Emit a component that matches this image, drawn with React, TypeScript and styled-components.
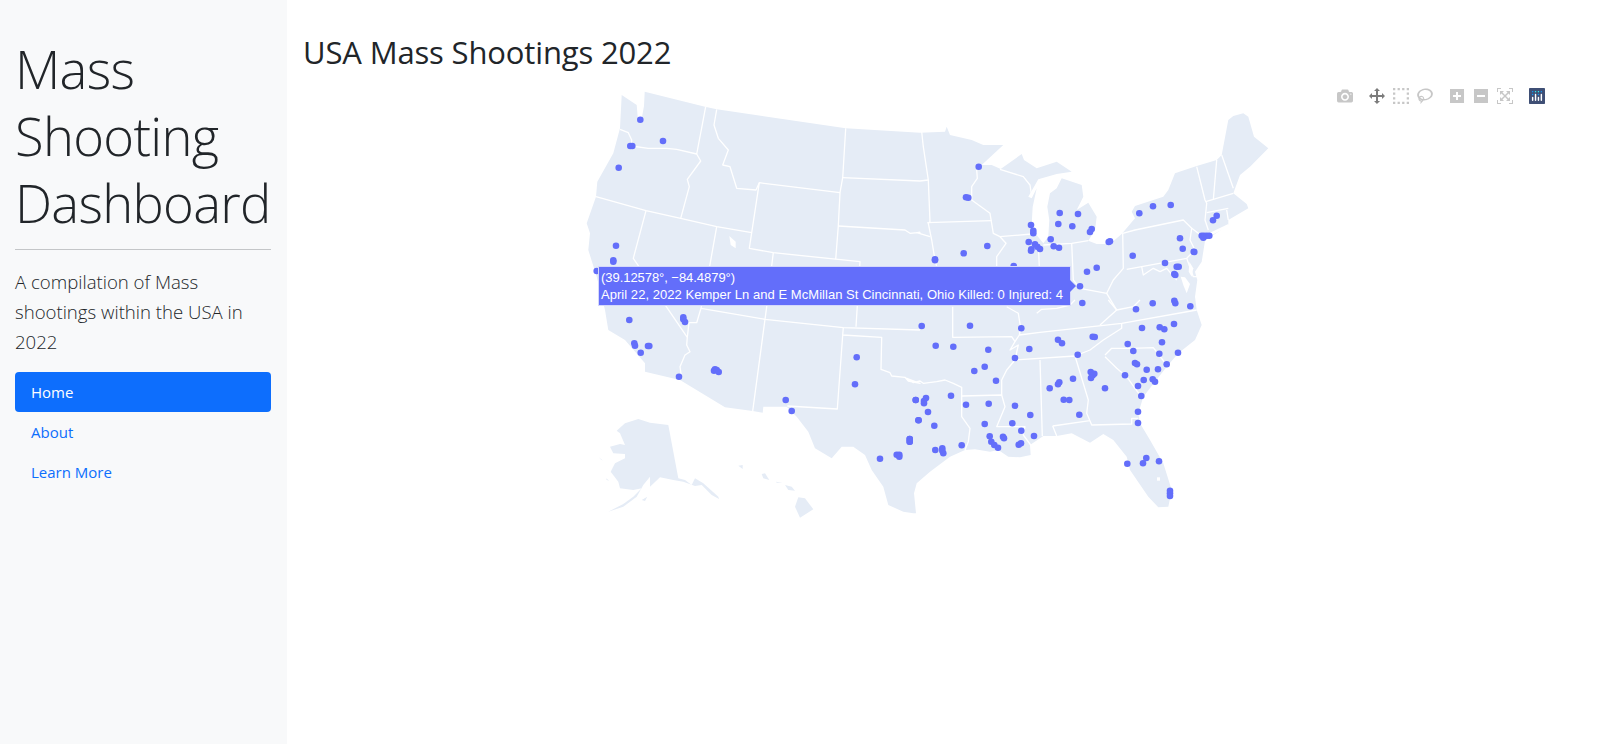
import styled, { createGlobalStyle } from 'styled-components'

const GlobalStyle = createGlobalStyle`
  html, body { margin: 0; padding: 0; height: 100%; overflow: hidden; background: #fff; }
  * { box-sizing: border-box; }
  body { font-family: "Open Sans", "Noto Sans", sans-serif; color: #212529; }
`

const Layout = styled.div`
  display: flex;
  height: 100vh;
`

const Sidebar = styled.aside`
  flex: 0 0 287px;
  min-width: 0;
  background: #f8f9fa;
  padding: 35px 16px 0 15px;
`

const Heading = styled.h1`
  margin: 0;
  font-size: 52.5px;
  font-weight: 300;
  line-height: 67.2px;
  letter-spacing: -0.7px;
`

const Rule = styled.hr`
  margin: 12px 0 17px;
  border: 0;
  border-top: 1px solid #c4c6c8;
`

const Lead = styled.p`
  margin: 0 0 15px;
  font-size: 18.6px;
  font-weight: 300;
  line-height: 30px;
`

const NavList = styled.nav`
  display: flex;
  flex-direction: column;
`

const NavLink = styled.a<{ $active?: boolean }>`
  display: block;
  height: 40px;
  padding: 0 16px;
  line-height: 40px;
  font-size: 15px;
  border-radius: 4px;
  text-decoration: none;
  color: ${p => (p.$active ? '#fff' : '#0d6efd')};
  background: ${p => (p.$active ? '#0d6efd' : 'transparent')};
`

const Main = styled.main`
  flex: 1;
  min-width: 0;
  padding: 29px 0 0 16px;
`

const Title = styled.h2`
  margin: 0;
  height: 55px;
  font-size: 31px;
  font-weight: 400;
  line-height: 46px;
  letter-spacing: -0.15px;
`

const PlotFrame = styled.div`
  position: relative;
  height: 450px;
`

const MapSvg = styled.svg`
  display: block;
  width: 100%;
  height: 100%;
`

const Land = styled.path`
  fill: #e5ecf6;
`

const Water = styled.path`
  fill: #fff;
`

const StateLine = styled.polyline`
  fill: none;
  stroke: #fff;
  stroke-width: 1.3;
  stroke-linejoin: round;
`

const Dot = styled.circle`
  fill: #636efa;
`

const ModeBar = styled.div`
  position: absolute;
  top: 1px;
  right: 49px;
  display: flex;
`

const ModeGroup = styled.div`
  display: flex;
  padding-left: 8px;
`

const ModeIcon = styled.svg<{ $on?: boolean }>`
  display: block;
  box-sizing: content-box;
  width: 16px;
  height: 16px;
  padding: 3px 4px;
  fill: ${p => (p.$on ? 'rgba(68,68,68,0.7)' : 'rgba(68,68,68,0.3)')};
`

const HoverBox = styled.div`
  position: absolute;
  left: 295px;
  top: 182px;
  width: 473px;
  height: 40px;
  padding: 2px 0 0 2px;
  background: #636efa;
  border: 1px solid #d5d8fb;
  color: #fff;
  font: 13px/17px "Liberation Sans", Arial, sans-serif;
  white-space: nowrap;

  &::after {
    content: '';
    position: absolute;
    left: 100%;
    top: 13px;
    border-style: solid;
    border-width: 6px 0 6px 6px;
    border-color: transparent transparent transparent #636efa;
  }
`

const HoverLine = styled.div<{ $spread?: boolean }>`
  letter-spacing: ${p => (p.$spread ? '0.04px' : '-0.05px')};
`

// map geometry is traced in four reference crops, each helper shifts one to page pixels
const crop = (ox: number, oy: number) => (s: string) =>
  s
    .trim()
    .split(/\s+/)
    .map(p => {
      const [x, y] = p.split(',').map(Number)
      return `${(ox + x / 3).toFixed(1)},${(oy + y / 3).toFixed(1)}`
    })
    .join(' ')

const nw = crop(570, 80)
const ne = crop(900, 80)
const sw = crop(570, 300)
const se = crop(900, 300)

const shape = (pts: string) => `M${pts.replace(/\s+/g, 'L')}Z`

const mainland = [
  nw('155,45 200,75 203,112 214,122 222,78 224,35 405,80 440,88 827,145 1050,158'),
  ne('135,155 140,140 150,165 215,180 250,195 310,195 245,255 275,255 302,267 365,222 372,240 410,265 470,245 515,275 470,282 415,298 385,350 395,355 410,325 398,380 395,430 402,455 430,490 445,470 448,420 442,380 450,340 470,325 485,295 545,315 550,350 530,390 565,368 590,410 585,450 565,482 590,492 630,492 665,462 705,415 695,395 705,378 790,350 805,330 825,280 890,258 950,240 965,225 985,120 1000,108 1030,100 1045,110 1062,170 1105,205 1050,260 1020,285 1000,340 1040,372 1045,385 985,420 985,435 930,472 915,482 905,545 885,575 892,600 885,650'),
  se('890,30 905,75 885,120 835,160 800,200 765,245 730,290 715,340 720,370 750,420 790,490 815,570 805,620 775,622 745,590 690,510 680,470 640,420 610,402 570,428 515,400 470,408 430,408 390,435 392,465 360,472 325,470 295,450 270,455 225,448 195,450 150,470 90,515 50,550 42,580 48,640'),
  sw('1030,640 1000,635 955,615 940,560 905,510 885,465 850,440 815,440 785,475 735,445 715,395 680,350 650,320 580,320 578,338 548,333 465,322 330,240 225,215 225,190 165,120 115,90 105,30'),
  nw('80,590 55,510 60,460 50,430 78,350 82,305 130,220 150,145'),
].join(' ')

const islands = [
  sw('205,357 240,368 295,375 325,535 345,540 365,555 375,535 400,550 445,590 447,597 425,585 395,555 375,558 340,545 310,540 270,532 240,560 240,530 220,555 200,590 160,620 115,635 160,612 190,590 215,565 190,570 150,565 145,545 122,515 135,490 165,475 165,462 130,460 120,440 150,432 165,435 150,400 140,392 165,370'),
  sw('215,600 232,590 225,603'),
  sw('85,470 100,483 92,478'),
  sw('108,535 118,542 110,540'),
  sw('505,497 518,495 518,507'),
  sw('575,522 585,520 598,540 580,535'),
  sw('618,545 638,548 620,548'),
  sw('645,555 665,560 675,572 655,570'),
  sw('685,592 705,595 730,628 690,653 675,620'),
]

const lakes = [
  nw('478,468 497,485 497,505 482,495'),
  se('771,532 780,532 780,542 771,542'),
  ne('842,590 855,592 870,612 860,640 850,615'),
  ne('868,545 880,565 875,590 866,575'),
  ne('930,458 985,432 987,438 935,466'),
]

const borders = [
  nw('150,148 175,158 185,180 185,198 235,205 290,205 320,208 380,222 392,243 352,298 358,320 332,415'),
  nw('407,80 380,222'),
  nw('440,88 432,135 445,175 475,210 458,255 480,260 500,325 558,330 568,308 810,338 818,293 827,145'),
  nw('818,293 1050,303') + ' ' + ne('85,300'),
  nw('568,308 545,458 538,505 610,518 870,545') + ' ' + sw('858,80'),
  nw('810,338 805,438 797,538'),
  nw('805,438 1005,450 1020,460 1050,457') + ' ' + ne('50,458 90,470'),
  nw('78,350 228,392 332,415 440,440 545,458'),
  nw('228,392 190,535') + ' ' + sw('352,112 350,135 360,155 345,165 330,200 335,235'),
  sw('352,112 357,68 380,68 393,25 585,58 820,83 1050,90'),
  nw('440,440 418,565') + ' ' + sw('393,25'),
  nw('610,518') + ' ' + sw('590,20 585,58 548,333'),
  sw('820,83 818,105 935,112 933,208 960,218 965,228 1005,232 1015,243 1050,250') + ' ' + se('20,235 40,248 60,243 70,250 110,245 135,240 160,250 185,262 185,350 210,385 205,425 195,450'),
  sw('818,105 802,327 652,318'),
  se('185,288 305,285 315,320 290,380 375,380 370,405 392,435'),
  se('158,20 158,112 335,110 345,125 330,150 355,135 345,180 320,210 305,240 305,285'),
  se('345,180 525,168 565,300 560,340 575,375 695,372 695,355 715,355'),
  se('358,105 420,97 665,70 890,30'),
  se('665,70 665,85 610,120 570,150 525,168'),
  se('615,165 635,145 695,145 760,143 800,195'),
  se('615,170 650,205 680,230 705,265 724,290'),
  se('420,180 427,408'),
  se('458,378 570,362'),
  se('458,378 470,408'),
  se('320,20 355,40 362,85 358,105 345,125'),
  se('410,40 425,28 470,25 510,15 525,0'),
  se('625,0 650,30 700,20 720,0'),
  se('600,75 650,30'),
  ne('65,155 70,200 85,300 90,425 85,430 95,480 105,540 110,560'),
  ne('82,428 275,422'),
  ne('230,270 232,295 215,320 215,360 270,400 280,460 300,470 318,490 290,530 290,560'),
  ne('300,470 395,462'),
  ne('300,268 370,290 390,315 395,350'),
  ne('415,490 418,560'),
  ne('430,495 515,490 565,482'),
  ne('515,490 520,600 540,625 620,640 640,600 670,565 668,460 705,450 850,420 875,445 870,480 885,510 860,535 680,568'),
  ne('620,640 650,690'),
  ne('875,445 915,475'),
  ne('890,260 915,360 920,370 915,420 925,450'),
  ne('950,240 940,360'),
  ne('965,225 1000,325'),
  ne('917,365 1000,340'),
  ne('920,398 985,385'),
  ne('980,390 985,420'),
  ne('860,535 880,590 895,590'),
  ne('725,560 730,585 760,565 780,575 800,565 830,600'),
]

const dots = [
  nw('211,119 279,183 181,198 187,198 146,263 138,497 130,541 130,545 80,573'),
  ne('236,260 198,352 205,353 479,399 534,402 393,435 475,432 517,439 400,452 400,460 575,447 570,456 452,478 386,486 262,498 405,493 412,500 420,507 394,508 393,512 461,499 477,503 191,520 105,538 105,541 630,484 626,486 840,475 848,506 881,515 883,516 698,527 795,549 830,560 836,560 823,582 826,585 590,563 561,575 540,619 547,669 758,670 708,688 823,662 826,670 871,679 718,400 759,379 812,375 950,407 939,421 905,467 912,467 920,467 928,467 910,473 341,558'),
  sw('178,60 340,52 340,58 345,66 193,130 195,137 212,158 234,138 238,138 327,230 435,208 432,212 440,210 446,216 860,172 855,253 647,300 665,333 1037,300 1045,361 1019,417 1019,425 930,476 980,464 988,464 988,470'),
  se('65,78 210,77 364,85 107,137 160,140 265,149 345,174 388,147 474,119 486,130 578,110 584,111 533,164 683,132 700,153 726,84 779,82 793,88 822,72 786,127 778,161 834,158 800,193 774,208 740,209 705,189 711,193 572,216 583,221 578,226 573,234 675,226 731,240 758,238 765,245 714,258 724,288 615,265 519,236 478,247 474,253 449,265 491,299 508,300 254,200 223,213 288,242 47,300 78,294 72,303 72,310 153,287 84,336 198,314 266,311 345,317 56,361 103,377 254,372 337,370 391,345 364,392 538,344 714,335 714,369 29,417 29,425 106,450 127,445 127,452 130,460 185,436 269,409 274,425 283,435 294,443 309,410 312,415 356,434 363,430 402,408 682,491 729,490 739,474 777,484 810,572 810,580 810,588'),
]
  .join(' ')
  .split(' ')
  .map(p => p.split(',').map(Number))

const CameraIcon = () => (
  <ModeIcon viewBox="0 0 1000 1000">
    <path
      transform="matrix(1 0 0 -1 0 850)"
      d="m500 450c-83 0-150-67-150-150 0-83 67-150 150-150 83 0 150 67 150 150 0 83-67 150-150 150z m400 150h-120c-16 0-34 13-39 29l-31 93c-6 15-23 28-40 28h-340c-16 0-34-13-39-28l-31-93c-6-16-23-29-39-29h-120c-55 0-100-45-100-100v-450c0-55 45-100 100-100h800c55 0 100 45 100 100v450c0 55-45 100-100 100z m-400-550c-138 0-250 112-250 250 0 138 112 250 250 250 138 0 250-112 250-250 0-138-112-250-250-250z m365 380c-19 0-35 16-35 35 0 19 16 35 35 35 19 0 35-16 35-35 0-19-16-35-35-35z"
    />
  </ModeIcon>
)

const PanIcon = () => (
  <ModeIcon $on viewBox="0 0 1000 1000">
    <path
      transform="matrix(1 0 0 -1 0 850)"
      d="m1000 350l-187 188 0-125-250 0 0 250 125 0-188 187-187-187 125 0 0-250-250 0 0 125-188-188 186-187 0 125 252 0 0-250-125 0 187-188 188 188-125 0 0 250 250 0 0-126 187 188z"
    />
  </ModeIcon>
)

const BoxIcon = () => (
  <ModeIcon viewBox="0 0 1000 1000">
    <path
      transform="matrix(1 0 0 -1 0 850)"
      d="m0 850l0-143 143 0 0 143-143 0z m286 0l0-143 143 0 0 143-143 0z m285 0l0-143 143 0 0 143-143 0z m286 0l0-143 143 0 0 143-143 0z m-857-286l0-143 143 0 0 143-143 0z m857 0l0-143 143 0 0 143-143 0z m-857-285l0-143 143 0 0 143-143 0z m857 0l0-143 143 0 0 143-143 0z m-857-286l0-143 143 0 0 143-143 0z m286 0l0-143 143 0 0 143-143 0z m285 0l0-143 143 0 0 143-143 0z m286 0l0-143 143 0 0 143-143 0z"
    />
  </ModeIcon>
)

const LassoIcon = () => (
  <ModeIcon viewBox="0 0 1031 1000">
    <path
      transform="matrix(1 0 0 -1 0 850)"
      d="m1018 538c-36 207-290 336-568 286-277-48-473-256-436-463 10-57 36-108 76-151-13-66 11-137 68-183 34-28 75-41 114-42l-55-70 0 0c-2-1-3-2-4-3-10-14-8-34 5-45 14-11 34-8 45 4 1 1 2 3 2 5l0 0 113 140c16 11 31 24 45 40 4 3 6 7 8 11 48-3 100 0 151 9 278 48 473 255 436 462z m-624-379c-80 14-149 48-197 96 42 42 109 47 156 9 33-26 47-66 41-105z m-187-74c-19 16-33 37-39 60 50-32 109-55 174-68-42-25-95-24-135 8z m360 75c-34-7-69-9-102-8 8 62-16 128-68 170-73 59-175 54-244-5-9 20-16 40-20 61-28 159 121 317 333 354s407-60 434-217c28-159-121-318-333-355z"
    />
  </ModeIcon>
)

const ZoomInIcon = () => (
  <ModeIcon viewBox="0 0 875 1000">
    <path
      transform="matrix(1 0 0 -1 0 850)"
      d="m1 787l0-875 875 0 0 875-875 0z m687-500l-187 0 0-187-125 0 0 187-188 0 0 125 188 0 0 187 125 0 0-187 187 0 0-125z"
    />
  </ModeIcon>
)

const ZoomOutIcon = () => (
  <ModeIcon viewBox="0 0 875 1000">
    <path transform="matrix(1 0 0 -1 0 850)" d="m0 788l0-876 875 0 0 876-875 0z m688-500l-500 0 0 125 500 0 0-125z" />
  </ModeIcon>
)

const AutoscaleIcon = () => (
  <ModeIcon viewBox="0 0 1000 1000">
    <path
      transform="matrix(1 0 0 -1 0 850)"
      d="m250 850l-187 0-63 0 0-62 0-188 63 0 0 188 187 0 0 62z m688 0l-188 0 0-62 188 0 0-188 62 0 0 188 0 62-62 0z m-875-938l0 188-63 0 0-188 0-62 63 0 187 0 0 62-187 0z m875 188l0-188-188 0 0-62 188 0 62 0 0 62 0 188-62 0z m-125 188l-1 0-93-94-156 156 156 156 92-93 2 0 0 250-250 0 0-2 93-92-156-156-156 156 94 92 0 2-250 0 0-250 0 0 93 93 157-156-157-156-93 94 0 0 0-250 250 0 0 0-94 93 156 157 156-157-93-93 0 0 250 0 0 250z"
    />
  </ModeIcon>
)

const PlotlyLogo = () => (
  <ModeIcon viewBox="0 0 132 132">
    <rect width="132" height="132" rx="6" fill="#3f4f75" />
    <circle cx="78" cy="54" r="6" fill="#119dff" />
    <circle cx="102" cy="30" r="6" fill="#119dff" />
    <circle cx="78" cy="30" r="6" fill="#25fefd" />
    <circle cx="54" cy="30" r="6" fill="#25fefd" />
    <circle cx="30" cy="30" r="6" fill="#119dff" />
    <circle cx="30" cy="54" r="6" fill="#119dff" />
    <path
      fill="#fff"
      d="M30,72a6,6,0,0,0-6,6v24a6,6,0,0,0,12,0V78A6,6,0,0,0,30,72Z M78,72a6,6,0,0,0-6,6v24a6,6,0,0,0,12,0V78A6,6,0,0,0,78,72Z M54,48a6,6,0,0,0-6,6v48a6,6,0,0,0,12,0V54A6,6,0,0,0,54,48Z M102,48a6,6,0,0,0-6,6v48a6,6,0,0,0,12,0V54A6,6,0,0,0,102,48Z"
    />
  </ModeIcon>
)

function App() {
  return (
    <Layout>
      <GlobalStyle />
      <Sidebar>
        <Heading>Mass Shooting Dashboard</Heading>
        <Rule />
        <Lead>A compilation of Mass shootings within the USA in 2022</Lead>
        <NavList>
          <NavLink $active href="#">Home</NavLink>
          <NavLink href="#">About</NavLink>
          <NavLink href="#">Learn More</NavLink>
        </NavList>
      </Sidebar>
      <Main>
        <Title>USA Mass Shootings 2022</Title>
        <PlotFrame>
          <MapSvg viewBox="303 84 1295 450" preserveAspectRatio="xMinYMin meet">
            <Land d={shape(mainland)} />
            {islands.map((pts, i) => (
              <Land key={i} d={shape(pts)} />
            ))}
            {lakes.map((pts, i) => (
              <Water key={i} d={shape(pts)} />
            ))}
            {borders.map((pts, i) => (
              <StateLine key={i} points={pts} />
            ))}
            {dots.map(([x, y], i) => (
              <Dot key={i} cx={x} cy={y} r={3.3} />
            ))}
          </MapSvg>
          <ModeBar>
            <ModeGroup>
              <CameraIcon />
            </ModeGroup>
            <ModeGroup>
              <PanIcon />
              <BoxIcon />
              <LassoIcon />
            </ModeGroup>
            <ModeGroup>
              <ZoomInIcon />
              <ZoomOutIcon />
              <AutoscaleIcon />
            </ModeGroup>
            <ModeGroup>
              <PlotlyLogo />
            </ModeGroup>
          </ModeBar>
          <HoverBox>
            <HoverLine>(39.12578°, −84.4879°)</HoverLine>
            <HoverLine $spread>April 22, 2022 Kemper Ln and E McMillan St Cincinnati, Ohio Killed: 0 Injured: 4</HoverLine>
          </HoverBox>
        </PlotFrame>
      </Main>
    </Layout>
  )
}

export default App
